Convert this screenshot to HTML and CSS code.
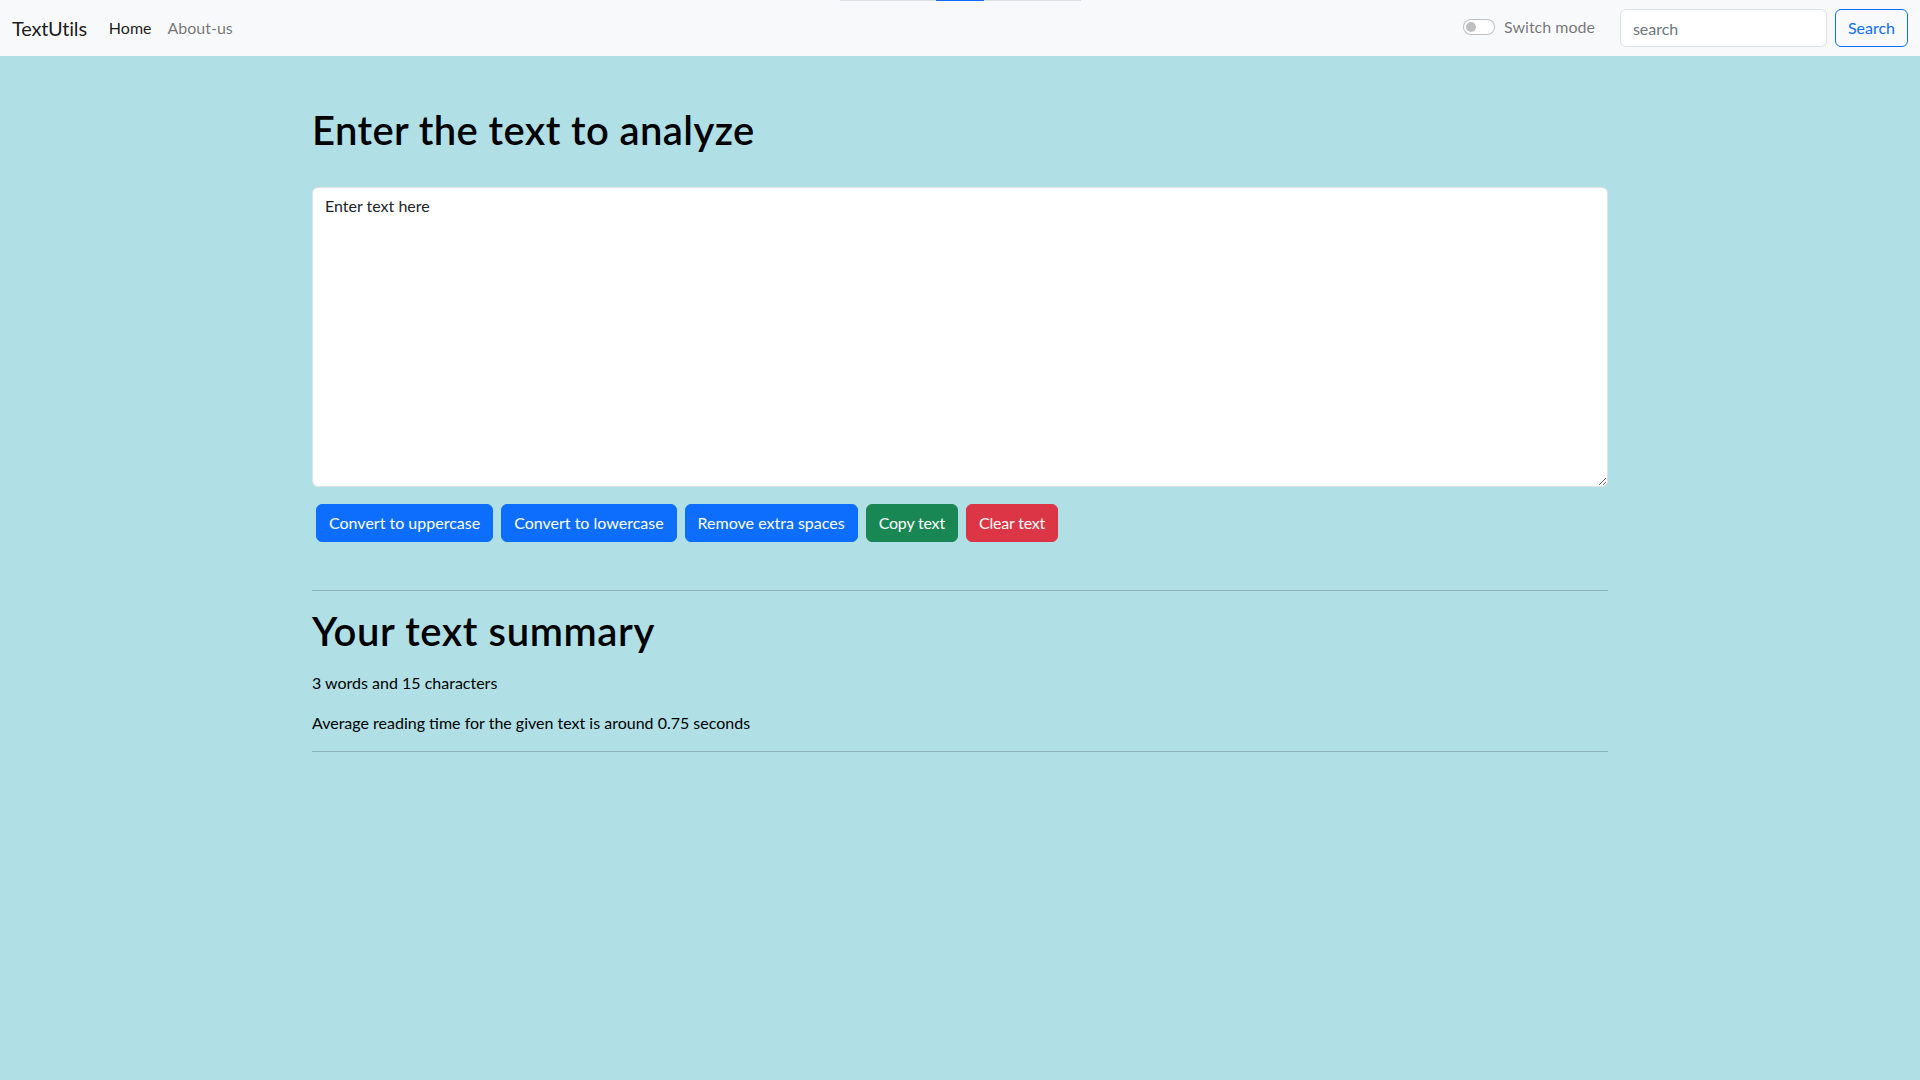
FILE: index.html
```html
<!DOCTYPE html>
<html lang="en">
<head>
<meta charset="utf-8">
<title>TextUtils</title>
<link rel="stylesheet" href="styles.css">
</head>
<body>
<div class="topbar"><span class="topbar-active"></span></div>
<nav class="navbar">
  <a class="brand" href="#">TextUtils</a>
  <ul class="nav-links">
    <li><a class="nav-link active" href="#">Home</a></li>
    <li><a class="nav-link" href="#">About-us</a></li>
  </ul>
  <div class="nav-right">
    <div class="switch-wrap">
      <span class="switch"><span class="knob"></span></span>
      <label class="switch-label">Switch mode</label>
    </div>
    <form class="search-form">
      <input class="search-input" type="search" placeholder="search">
      <button class="btn-outline" type="button">Search</button>
    </form>
  </div>
</nav>
<main class="container">
  <h1 class="title">Enter the text to analyze</h1>
  <textarea class="text-box">Enter text here</textarea>
  <div class="actions">
    <button class="btn btn-primary" type="button">Convert to uppercase</button>
    <button class="btn btn-primary" type="button">Convert to lowercase</button>
    <button class="btn btn-primary" type="button">Remove extra spaces</button>
    <button class="btn btn-success" type="button">Copy text</button>
    <button class="btn btn-danger" type="button">Clear text</button>
  </div>
  <hr class="rule rule-top">
  <h1 class="summary-title">Your text summary</h1>
  <p class="summary-line">3 words and 15 characters</p>
  <p class="summary-line">Average reading time for the given text is around 0.75 seconds</p>
  <hr class="rule rule-bottom">
</main>
</body>
</html>
```
FILE: styles.css
```css
* { box-sizing: border-box; }
html, body { margin: 0; padding: 0; }
body {
  background: #b0e0e6;
  font-family: "Lato", "Liberation Sans", sans-serif;
  font-size: 16px;
  line-height: 1.5;
  color: #212529;
  min-height: 1080px;
}
.topbar {
  position: absolute;
  top: 0;
  left: 840px;
  width: 241px;
  height: 1px;
  background: #dcdfe3;
}
.topbar-active {
  position: absolute;
  left: 96px;
  top: 0;
  width: 48px;
  height: 1px;
  background: #0d6efd;
}
.navbar {
  height: 56px;
  background: #f8f9fa;
  display: flex;
  align-items: center;
  padding: 8px 12px;
}
.brand {
  font-size: 20px;
  line-height: 30px;
  padding: 5px 0;
  margin-right: 14px;
  color: rgba(0, 0, 0, 0.9);
  text-decoration: none;
  letter-spacing: -0.2px;
}
.nav-links {
  list-style: none;
  margin: 0;
  padding: 0;
  display: flex;
}
.nav-link {
  display: block;
  padding: 8px 8px;
  color: rgba(0, 0, 0, 0.55);
  text-decoration: none;
}
.nav-link.active { color: rgba(0, 0, 0, 0.9); }
.nav-right {
  margin-left: auto;
  display: flex;
  align-items: center;
}
.switch-wrap {
  display: flex;
  align-items: center;
  gap: 9px;
  margin-top: -2px;
}
.switch {
  display: block;
  width: 32px;
  height: 16px;
  border: 1px solid rgba(0, 0, 0, 0.25);
  border-radius: 16px;
  background: #fff;
  position: relative;
}
.knob {
  position: absolute;
  left: 2px;
  top: 2px;
  width: 10px;
  height: 10px;
  border-radius: 50%;
  background: rgba(0, 0, 0, 0.25);
}
.switch-label { color: rgba(0, 0, 0, 0.55); }
.search-form {
  display: flex;
  align-items: center;
  margin-left: 25px;
}
.search-input {
  width: 207px;
  height: 38px;
  padding: 6px 12px;
  font-family: inherit;
  font-size: 16px;
  line-height: 1.5;
  color: #212529;
  background: #fff;
  border: 1px solid #dee2e6;
  border-radius: 6px;
  outline: none;
}
.search-input::placeholder { color: #6c757d; opacity: 1; }
.btn-outline {
  margin-left: 8px;
  height: 38px;
  padding: 6px 12px;
  font-family: inherit;
  font-size: 16px;
  line-height: 1.5;
  color: #0d6efd;
  background: transparent;
  border: 1px solid #0d6efd;
  border-radius: 6px;
}
.container {
  max-width: 1320px;
  margin: 0 auto;
  padding: 0 12px;
  color: #000;
}
.title {
  font-size: 40px;
  font-weight: 600;
  line-height: 1.2;
  letter-spacing: 0.4px;
  margin: 50px 0 33px;
}
.text-box {
  display: block;
  width: 100%;
  height: 300px;
  padding: 6px 12px;
  font-family: inherit;
  font-size: 16px;
  line-height: 1.5;
  color: #212529;
  background: #fff;
  border: 1px solid #dee2e6;
  border-radius: 6px;
  resize: vertical;
  outline: none;
}
.actions {
  display: flex;
  gap: 8px;
  margin: 17px 0 0 4px;
}
.btn {
  height: 38px;
  padding: 6px 12px;
  font-family: inherit;
  font-size: 16px;
  line-height: 1.5;
  color: #fff;
  border: 1px solid transparent;
  border-radius: 6px;
}
.btn-primary { background: #0d6efd; border-color: #0d6efd; }
.btn-success { background: #198754; border-color: #198754; }
.btn-danger { background: #dc3545; border-color: #dc3545; }
.btn-success, .btn-danger { letter-spacing: -0.2px; }
.rule {
  border: 0;
  border-top: 1px solid rgba(33, 37, 41, 0.25);
  height: 0;
}
.rule-top { margin: 48px 0 16px; }
.rule-bottom { margin: 0; }
.summary-title {
  font-size: 40px;
  font-weight: 600;
  line-height: 1.2;
  letter-spacing: 0.6px;
  margin: 0 0 16px;
}
.summary-line { margin: 0 0 16px; }
```
